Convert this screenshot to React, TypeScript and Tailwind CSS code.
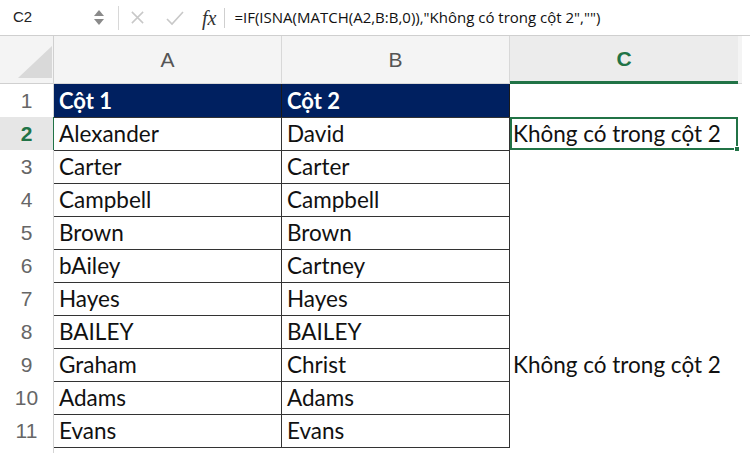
import React from 'react';

const rows: [string, string, string][] = [
  ['Alexander', 'David', 'Không có trong cột 2'],
  ['Carter', 'Carter', ''],
  ['Campbell', 'Campbell', ''],
  ['Brown', 'Brown', ''],
  ['bAiley', 'Cartney', ''],
  ['Hayes', 'Hayes', ''],
  ['BAILEY', 'BAILEY', ''],
  ['Graham', 'Christ', 'Không có trong cột 2'],
  ['Adams', 'Adams', ''],
  ['Evans', 'Evans', ''],
];

const cellFont = { fontFamily: 'Lato, "Open Sans", sans-serif' };

export default function App() {
  return (
    <div className="w-[750px] h-[466px] bg-white overflow-hidden relative" style={{ fontFamily: '"Liberation Sans", Arial, sans-serif' }}>
      {/* formula bar */}
      <div className="h-[36px] flex items-center border-b border-[#cfcfcf] text-[#222]">
        <div className="w-[84px] pl-[13px] text-[15px]">C2</div>
        <div className="w-[30px] flex flex-col items-center gap-[3px]">
          <svg width="10" height="6" viewBox="0 0 10 6"><path d="M5 0 L10 6 L0 6 Z" fill="#8a8a8a" /></svg>
          <svg width="10" height="6" viewBox="0 0 10 6"><path d="M0 0 L10 0 L5 6 Z" fill="#8a8a8a" /></svg>
        </div>
        <div className="w-px h-[24px] bg-[#d8d8d8] ml-[4px]" />
        <svg width="15" height="15" viewBox="0 0 16 16" className="ml-[11px]">
          <path d="M2 2 L14 14 M14 2 L2 14" stroke="#c8c8c8" strokeWidth="1.6" />
        </svg>
        <svg width="18" height="16" viewBox="0 0 18 16" className="ml-[21px]">
          <path d="M1 9 L6 14 L17 2" stroke="#c8c8c8" strokeWidth="1.6" fill="none" />
        </svg>
        <span className="ml-[18px] text-[20px] italic text-[#333]" style={{ fontFamily: '"Liberation Serif", serif' }}>fx</span>
        <div className="w-px h-[20px] bg-[#cfcfcf] ml-[8px]" />
        <div className="ml-[9px] text-[15px] text-[#111] whitespace-nowrap" style={{ fontFamily: '"Open Sans", sans-serif' }}>
          =IF(ISNA(MATCH(A2,B:B,0)),"Không có trong cột 2","")
        </div>
      </div>

      {/* column headers */}
      <div className="h-[48px] flex text-[21px] text-[#555]">
        <div className="w-[54px] relative bg-[#f4f4f4] border-r border-b border-[#d0d0d0] overflow-hidden">
          <svg width="54" height="48" viewBox="0 0 54 48" className="absolute inset-0">
            <path d="M52 10 L52 42 L18 42 Z" fill="#d9d9d9" />
          </svg>
        </div>
        <div className="w-[228px] flex items-center justify-center bg-[#f4f4f4] border-r border-b border-[#d8d8d8]">A</div>
        <div className="w-[228px] flex items-center justify-center bg-[#f4f4f4] border-r border-b border-[#d8d8d8]">B</div>
        <div className="w-[228px] flex items-center justify-center bg-[#ececec] border-b-[3px] border-[#217346] text-[#217346] font-bold">C</div>
        <div className="w-[4px] bg-[#f4f4f4] border-b border-[#d8d8d8]" />
      </div>

      {/* row 1 */}
      <div className="h-[33px] flex">
        <div className="w-[54px] flex items-center justify-center text-[21px] text-[#666] border-r border-[#d4d4d4]">1</div>
        <div className="w-[228px] flex items-center pl-[5px] bg-[#002060] text-white font-bold text-[22px] border-r border-[#1a1a1a]" style={cellFont}>Cột 1</div>
        <div className="w-[228px] flex items-center pl-[5px] bg-[#002060] text-white font-bold text-[22px] border-r border-[#1a1a1a]" style={cellFont}>Cột 2</div>
        <div className="w-[228px]" />
      </div>

      {rows.map((r, i) => {
        const n = i + 2;
        const selected = n === 2;
        return (
          <div key={n} className="h-[33px] flex">
            <div
              className={`w-[54px] flex items-center justify-center text-[21px] border-r ${
                selected ? 'bg-[#e6e6e6] text-[#217346] font-bold border-[#217346]' : 'text-[#666] border-[#d4d4d4]'
              }`}
            >
              {n}
            </div>
            <div className="w-[228px] flex items-center pl-[5px] text-[22.5px] text-[#111] border-t border-r border-[#333]" style={cellFont}>
              {r[0]}
            </div>
            <div className="w-[228px] flex items-center pl-[5px] text-[22.5px] text-[#111] border-t border-r border-[#333]" style={cellFont}>
              {r[1]}
            </div>
            <div
              className={`w-[228px] flex items-center text-[22.5px] text-[#111] relative whitespace-nowrap ${
                selected ? 'border-2 border-[#217346] pl-[1px]' : 'pl-[3px]'
              }`}
              style={cellFont}
            >
              {r[2]}
              {selected && <div className="absolute right-[-4px] bottom-[-4px] w-[6px] h-[6px] bg-[#217346] border border-white" />}
            </div>
          </div>
        );
      })}
      <div className="flex h-[20px]">
        <div className="w-[54px] border-r border-[#d4d4d4] h-[6px]" />
        <div className="w-[456px] border-t border-[#333]" />
      </div>
    </div>
  );
}
